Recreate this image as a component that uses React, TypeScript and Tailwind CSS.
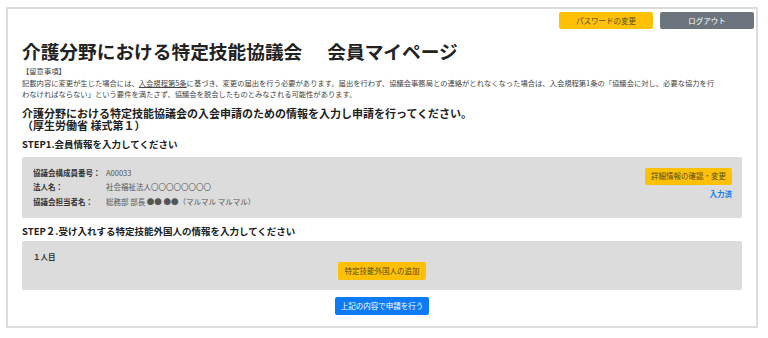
const jp = { fontFamily: '"Noto Sans CJK JP", "Noto Sans", sans-serif' }

const members = [
  { label: "協議会構成員番号：", value: "A00033" },
  { label: "法人名：", value: "社会福祉法人〇〇〇〇〇〇〇〇" },
  { label: "協議会担当者名：", value: "総務部 部長 ●● ●●（マルマル マルマル）" },
]

export default function App() {
  return (
    <div className="w-[768px] h-[338px] bg-white pl-[6px] pt-[7px] text-[#333]" style={jp}>
      <div className="w-[752px] h-[321px] border-2 border-[#dcdcdc] flex flex-col">
        {/* top buttons */}
        <div className="flex justify-end gap-[7px] pt-[3px] pr-[2px]">
          <button className="w-[94px] h-[17px] rounded-[2px] bg-[#ffc107] text-[7.5px] text-[#5a4a14]">
            パスワードの変更
          </button>
          <button className="w-[94px] h-[17px] rounded-[2px] bg-[#6c757d] text-[7.5px] text-white">
            ログアウト
          </button>
        </div>

        <div className="px-[14px]">
          <h1 className="mt-[10px] text-[18.7px] leading-[24px] font-bold text-[#222] whitespace-nowrap">
            介護分野における特定技能協議会<span className="ml-[25px]">会員マイページ</span>
          </h1>

          <div className="mt-[3px] text-[7.3px] leading-[11.5px] text-[#444] whitespace-nowrap">
            <div>【留意事項】</div>
            <div>
              記載内容に変更が生じた場合には、<span className="underline">入会規程第5条</span>
              に基づき、変更の届出を行う必要があります。届出を行わず、協議会事務局との連絡がとれなくなった場合は、入会規程第1条の「協議会に対し、必要な協力を行
            </div>
            <div>わなければならない」という要件を満たさず、協議会を脱会したものとみなされる可能性があります。</div>
          </div>

          <h2 className="mt-[6px] text-[11px] leading-[12px] font-bold text-[#222] whitespace-nowrap">
            <div>介護分野における特定技能協議会の入会申請のための情報を入力し申請を行ってください。</div>
            <div>（厚生労働省 様式第１）</div>
          </h2>

          <h3 className="mt-[7px] text-[9.5px] leading-[12px] font-bold text-[#222]">STEP1.会員情報を入力してください</h3>

          <div className="mt-[7px] h-[61px] rounded-[2px] bg-[#dcdcdc] flex justify-between pl-[11px] pr-[10px] pt-[9px]">
            <div className="flex flex-col text-[7.5px] leading-[14.5px]">
              {members.map((m) => (
                <div key={m.label} className="flex">
                  <span className="w-[73px] font-bold text-[#333]">{m.label}</span>
                  <span className="text-[#555]">{m.value}</span>
                </div>
              ))}
            </div>
            <div className="flex flex-col items-end pt-[2px]">
              <button className="w-[87px] h-[17px] rounded-[2px] bg-[#ffc107] text-[7.5px] text-[#5a4a14]">
                詳細情報の確認・変更
              </button>
              <span className="mt-[3px] text-[7.5px] leading-[12px] font-bold text-[#1a7cf5]">入力済</span>
            </div>
          </div>

          <h3 className="mt-[7px] text-[9.5px] leading-[12px] font-bold text-[#222]">
            STEP２.受け入れする特定技能外国人の情報を入力してください
          </h3>

          <div className="mt-[4px] h-[49px] rounded-[2px] bg-[#dcdcdc] flex flex-col pt-[10px] pl-[11px]">
            <div className="text-[7.5px] leading-[12px] font-bold text-[#333]">１人目</div>
            <div className="flex justify-center -ml-[11px] -mt-[1px]">
              <button className="w-[88px] h-[18px] rounded-[2px] bg-[#ffc107] text-[7.5px] text-[#5a4a14]">
                特定技能外国人の追加
              </button>
            </div>
          </div>

          <div className="mt-[7px] flex justify-center">
            <button className="w-[94px] h-[18px] rounded-[2px] bg-[#0d7bf7] text-[7.5px] text-white">
              上記の内容で申請を行う
            </button>
          </div>
        </div>
      </div>
    </div>
  )
}
